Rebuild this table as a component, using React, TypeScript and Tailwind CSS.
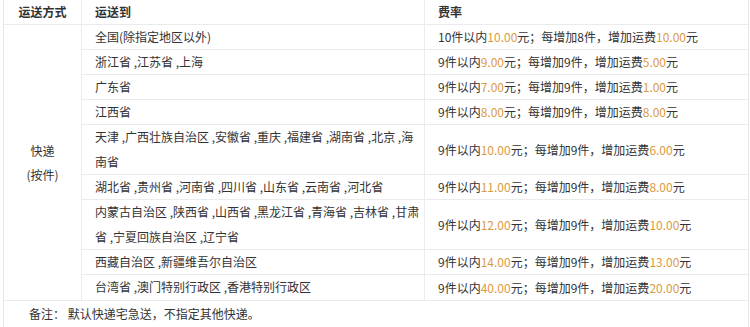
const price = "text-[#dc9a3e]";

type Rate = { to: React.ReactNode; first: string; base: string; add: string; fee: string; tall?: boolean };

const rates: Rate[] = [
    { to: "全国(除指定地区以外)", first: "10", base: "10.00", add: "8", fee: "10.00" },
    { to: "浙江省 ,江苏省 ,上海", first: "9", base: "9.00", add: "9", fee: "5.00" },
    { to: "广东省", first: "9", base: "7.00", add: "9", fee: "1.00" },
    { to: "江西省", first: "9", base: "8.00", add: "9", fee: "8.00" },
    {
        to: (
            <>
                天津 ,广西壮族自治区 ,安徽省 ,重庆 ,福建省 ,湖南省 ,北京 ,海
                <br />
                南省
            </>
        ),
        first: "9",
        base: "10.00",
        add: "9",
        fee: "6.00",
        tall: true,
    },
    { to: "湖北省 ,贵州省 ,河南省 ,四川省 ,山东省 ,云南省 ,河北省", first: "9", base: "11.00", add: "9", fee: "8.00" },
    {
        to: (
            <>
                内蒙古自治区 ,陕西省 ,山西省 ,黑龙江省 ,青海省 ,吉林省 ,甘肃
                <br />
                省 ,宁夏回族自治区 ,辽宁省
            </>
        ),
        first: "9",
        base: "12.00",
        add: "9",
        fee: "10.00",
        tall: true,
    },
    { to: "西藏自治区 ,新疆维吾尔自治区", first: "9", base: "14.00", add: "9", fee: "13.00" },
    { to: "台湾省 ,澳门特别行政区 ,香港特别行政区", first: "9", base: "40.00", add: "9", fee: "20.00" },
];

export default function App() {
    return (
        <main className="h-[327px] w-[750px] bg-white pl-[3px] font-['Noto_Sans_CJK_SC',sans-serif] text-[12px] text-[#333]">
            <div className="w-[746px] border-x border-b border-[#e6e6e6]">
                <div className="grid h-[25px] grid-cols-[78px_343px_1fr] border-b border-[#ebebeb] font-bold leading-[24px]">
                    <div className="border-r border-[#ebebeb] text-center">运送方式</div>
                    <div className="border-r border-[#ebebeb] pl-[13px]">运送到</div>
                    <div className="pl-[13px]">费率</div>
                </div>

                <div className="flex border-b border-[#ebebeb]">
                    <div className="flex w-[78px] shrink-0 flex-col items-center justify-center border-r border-[#ebebeb] leading-[24px]">
                        <span>快递</span>
                        <span>(按件)</span>
                    </div>
                    <div className="flex-1">
                        {rates.map((r, i) => (
                            <div
                                key={i}
                                className={`grid grid-cols-[343px_1fr] ${i < rates.length - 1 ? "border-b border-[#ebebeb]" : ""} ${r.tall ? "h-[50px]" : "h-[25px]"}`}
                            >
                                <div className="border-r border-[#ebebeb] pl-[13px] leading-[24.5px]">{r.to}</div>
                                <div className="flex items-center pl-[13px]">
                                    {r.first}件以内<span className={price}>{r.base}</span>元；每增加{r.add}件，增加运费
                                    <span className={price}>{r.fee}</span>元
                                </div>
                            </div>
                        ))}
                    </div>
                </div>

                <div className="h-[26px] pl-[25px] leading-[26px]">备注： 默认快递宅急送，不指定其他快递。</div>
            </div>
        </main>
    );
}
